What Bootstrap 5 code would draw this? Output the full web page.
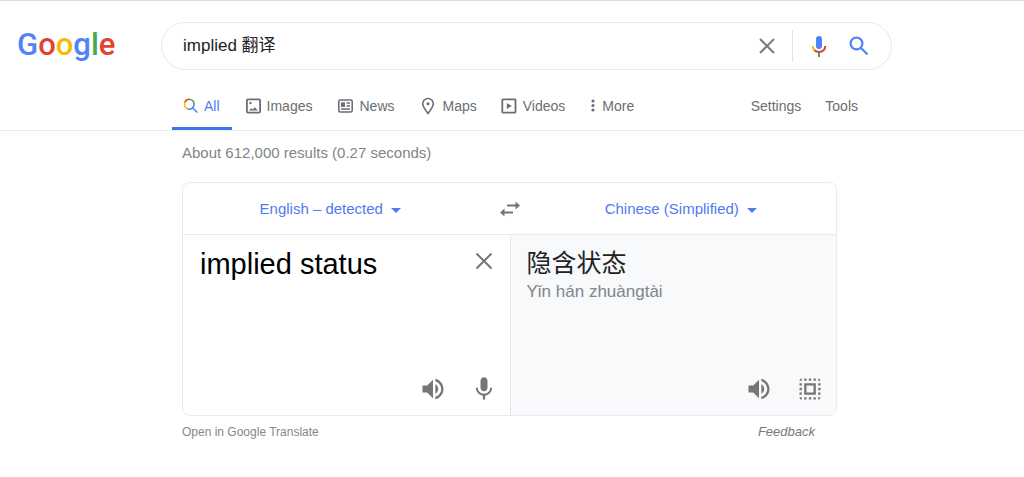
<!DOCTYPE html>
<html lang="en">
<head>
<meta charset="utf-8">
<meta name="viewport" content="width=device-width, initial-scale=1">
<title>implied 翻译 - Google Search</title>
<link href="https://cdn.jsdelivr.net/npm/bootstrap@5.3.0/dist/css/bootstrap.min.css" rel="stylesheet">
<style>
  body { font-family: "Liberation Sans", "Noto Sans CJK SC", sans-serif; font-size: 14px; color: #222; }
  a { text-decoration: none; color: inherit; }
  svg { display: block; flex: none; }
  button { line-height: 20px; }
  .page-top { border-top: 1px solid #dadce0; padding-top: 21px; }
  .brand-col { width: 161px; padding-left: 17px; flex: none; }
  .brand { font: 500 31px/46px Roboto, sans-serif; }
  .g-blue { color: #4f83f7; } .g-red { color: #e0432f; } .g-yellow { color: #f5bb06; } .g-green { color: #4aa752; }
  .search-box { max-width: 731px; height: 48px; border: 1px solid #e8e9eb; border-radius: 24px; padding: 0 19px 0 21px; }
  .search-box input { font-size: 17px; color: #222; outline: 0; }
  .search-divider { width: 1px; height: 32px; background: #e2e4e7; margin: 0 14px 0 13px; }
  .tabs { padding: 12px 0 0 172px; border-bottom: 1px solid #ebebeb; color: #6a6e73; }
  .tabs-inner { max-width: 686px; }
  .tab-link { height: 48px; gap: 6px; padding-top: 3px; border-bottom: 3px solid transparent; }
  .tab-link.current { color: #4f7df3; border-color: #3b76ec; padding-left: 11px; padding-right: 12px; }
  .tab-images { margin-left: 14px; }
  .main-col { margin-left: 182px; max-width: 655px; }
  .stats { font-size: 15px; line-height: 20px; color: #808589; margin: 12px 0 19px; }
  .translator { border: 1px solid #e8eaed; border-radius: 8px; overflow: hidden; }
  .lang-bar { height: 52px; border-bottom: 1px solid #e8eaed; }
  .lang-from { padding-right: 20px; }
  .lang-to { padding-left: 12px; padding-right: 8px; }
  .lang-btn { font-size: 15px; color: #4f7bf0; gap: 8px; }
  .lang-btn svg { margin-top: 3px; }
  .pane { height: 180px; padding: 12px 12px 12px 17px; }
  .pane-out { background: #f8f9fb; border-left: 1px solid #e4e6e9; padding-left: 16px; }
  .source-text { font-size: 29px; line-height: 34px; color: #000; resize: none; outline: 0; }
  .result-text { font-size: 25px; line-height: 32px; color: #222; }
  .pinyin { font-size: 17px; line-height: 26px; color: #80868b; }
  .tool { color: #757575; }
  .pane .tool { width: 28px; }
  .tool-row { gap: 23px; }
  .foot { font-size: 12px; line-height: 16px; color: #85888b; padding: 8px 22px 0 0; }
  .feedback { font-size: 13px; color: #77797c; }
</style>
</head>
<body>
<header class="page-top">
  <div class="d-flex">
    <div class="brand-col"><a href="#" class="brand" aria-label="Google"><span class="g-blue">G</span><span class="g-red">o</span><span class="g-yellow">o</span><span class="g-blue">g</span><span class="g-green">l</span><span class="g-red">e</span></a></div>
    <form class="search-box d-flex align-items-center flex-grow-1">
      <input class="border-0 bg-transparent p-0 flex-grow-1" type="text" aria-label="Search" value="implied 翻译">
      <button type="button" class="border-0 bg-transparent p-0" aria-label="Clear"><svg width="24" height="24" viewBox="0 0 24 24" stroke="#787c80" stroke-width="2" fill="none"><path d="M5 5l14 14M19 5L5 19"/></svg></button>
      <span class="search-divider"></span>
      <button type="button" class="border-0 bg-transparent p-0" aria-label="Search by voice"><svg width="24" height="24" viewBox="0 0 24 24" fill="none"><rect x="9" y="2" width="6" height="13" rx="3" fill="#4f83f7"/><path d="M12 18v5" stroke="#4aa752" stroke-width="2"/><path d="M5.700 12c0 2 .8 3.600 2 4.600" stroke="#f5bb06" stroke-width="2"/><path d="M7.400 16.200c2.300 2.300 6.900 2.300 9.200 0 1.100-1.100 1.700-2.500 1.700-4.200" stroke="#e0432f" stroke-width="2"/></svg></button>
      <button type="submit" class="border-0 bg-transparent p-0 ms-3" aria-label="Google Search"><svg width="25" height="24" viewBox="0 0 25 24" fill="none" stroke="#4f83f7" stroke-width="2.200"><circle cx="9.500" cy="9.500" r="5.900"/><path d="M13.800 13.800l6.700 6.700"/></svg></button>
    </form>
  </div>
  <nav class="tabs">
    <div class="tabs-inner d-flex justify-content-between">
      <div class="d-flex">
        <a href="#" class="tab-link current d-flex align-items-center" aria-current="page"><svg width="15" height="16" viewBox="0 0 15 16" fill="none" stroke-width="1.600"><path d="M1.700 4.600A5 5 0 0 1 6.200 1.200" stroke="#e0432f"/><path d="M6 1.200a5 5 0 0 1 5.100 5" stroke="#4aa752"/><path d="M1.900 4.200a5 5 0 0 0 3.200 6.900" stroke="#f5bb06"/><path d="M11.100 6.100a5 5 0 0 1-6.300 4.900M9.600 9.700l4.800 4.800" stroke="#4f83f7"/></svg>All</a>
        <a href="#" class="tab-link tab-images d-flex align-items-center"><svg width="15" height="16" viewBox="0 0 15 16" fill="none" stroke="currentColor" stroke-width="1.800"><rect x=".9" y="1.400" width="13.200" height="13.200" rx="1"/><path d="M3 12.500l2-2.200 1.500 1.200 2.300-2.200 3 3.200z" fill="currentColor" stroke="none"/><circle cx="4.500" cy="5" r="1.200" fill="currentColor" stroke="none"/></svg>Images</a>
        <a href="#" class="tab-link d-flex align-items-center ms-4"><svg width="17" height="16" viewBox="-1 0 17 16" fill="none" stroke="currentColor" stroke-width="1.600"><rect x="1.800" y="2" width="13.400" height="12" rx="1.500"/><path d="M4 8h4M9.500 5h3.500M9.500 8h3.500M4 11h9"/><path d="M4 4.300h4v4.200H4z" fill="currentColor" stroke="none"/></svg>News</a>
        <a href="#" class="tab-link d-flex align-items-center ms-4"><svg width="18" height="18" viewBox="0 0 18 18" fill="none" stroke="currentColor" stroke-width="1.600"><path d="M9 16.500C6 12.500 3.700 9.500 3.700 6.800a5.300 5.300 0 0 1 10.600 0c0 2.700-2.300 5.700-5.300 9.700z"/><circle cx="9" cy="6.800" r="1.500" fill="currentColor" stroke="none"/></svg>Maps</a>
        <a href="#" class="tab-link d-flex align-items-center ms-4"><svg width="16" height="16" viewBox="0 0 16 16" fill="none" stroke="currentColor" stroke-width="1.800"><rect x="1.300" y="1.400" width="13.200" height="13.200" rx=".5"/><path d="M5.800 5l5 3-5 3z" fill="currentColor" stroke="none"/></svg>Videos</a>
        <a href="#" class="tab-link d-flex align-items-center ms-4"><svg width="7" height="16" viewBox="0 0 7 16" fill="currentColor"><circle cx="4" cy="3" r="1.600"/><circle cx="4" cy="7.500" r="1.600"/><circle cx="4" cy="12" r="1.600"/></svg>More</a>
      </div>
      <div class="d-flex">
        <a href="#" class="tab-link d-flex align-items-center">Settings</a>
        <a href="#" class="tab-link d-flex align-items-center ms-4">Tools</a>
      </div>
    </div>
  </nav>
</header>
<main class="main-col">
  <p class="stats">About 612,000 results (0.27 seconds)</p>
  <section class="translator">
    <div class="lang-bar d-flex align-items-center">
      <div class="col lang-from d-flex justify-content-center"><button type="button" class="lang-btn border-0 bg-transparent p-0 d-flex align-items-center">English – detected<svg width="10" height="5" viewBox="0 0 10 5" fill="currentColor"><path d="M0 0h10L5 5z"/></svg></button></div>
      <button type="button" class="tool border-0 bg-transparent p-0" aria-label="Swap languages"><svg width="24" height="24" viewBox="0 0 24 24" fill="none" stroke="currentColor" stroke-width="2"><path d="M9 8.500h9M15 15.500H6"/><path d="M17.500 4.500v8l4.500-4zM6.500 11.500v8L2 15.500z" fill="currentColor" stroke="none"/></svg></button>
      <div class="col lang-to d-flex justify-content-center"><button type="button" class="lang-btn border-0 bg-transparent p-0 d-flex align-items-center">Chinese (Simplified)<svg width="10" height="5" viewBox="0 0 10 5" fill="currentColor"><path d="M0 0h10L5 5z"/></svg></button></div>
    </div>
    <div class="row g-0">
      <div class="col-6 pane d-flex flex-column justify-content-between">
        <div class="d-flex align-items-start flex-grow-1">
          <textarea class="source-text border-0 bg-transparent p-0 flex-grow-1" rows="2" aria-label="Source text">implied status</textarea>
          <button type="button" class="tool border-0 bg-transparent p-0" aria-label="Clear text"><svg width="28" height="28" viewBox="0 0 28 28" stroke="currentColor" stroke-width="2"><path d="M6.500 6.500l15 15M21.500 6.500l-15 15"/></svg></button>
        </div>
        <div class="tool-row d-flex justify-content-end">
          <button type="button" class="tool border-0 bg-transparent p-0" aria-label="Listen"><svg width="28" height="28" viewBox="0 0 24 24" fill="currentColor"><path d="M3 9v6h4l5 5V4L7 9H3zm13.500 3A4.500 4.500 0 0 0 14 7.970v8.050c1.480-.73 2.500-2.250 2.500-4.020zM14 3.230v2.060c2.890.86 5 3.540 5 6.710s-2.110 5.850-5 6.710v2.060c4.010-.91 7-4.490 7-8.770s-2.990-7.860-7-8.770z"/></svg></button>
          <button type="button" class="tool border-0 bg-transparent p-0" aria-label="Speak"><svg width="28" height="28" viewBox="0 0 24 24" fill="currentColor"><path d="M12 14c1.660 0 3-1.340 3-3V5c0-1.660-1.340-3-3-3S9 3.340 9 5v6c0 1.660 1.340 3 3 3zm5.300-3c0 3-2.540 5.100-5.300 5.100S6.700 14 6.700 11H5c0 3.410 2.720 6.230 6 6.720V21h2v-3.280c3.280-.48 6-3.300 6-6.720h-1.700z"/></svg></button>
        </div>
      </div>
      <div class="col-6 pane pane-out d-flex flex-column justify-content-between" lang="zh-CN">
        <div>
          <div class="result-text">隐含状态</div>
          <div class="pinyin">Yǐn hán zhuàngtài</div>
        </div>
        <div class="tool-row d-flex justify-content-end">
          <button type="button" class="tool border-0 bg-transparent p-0" aria-label="Listen to translation"><svg width="28" height="28" viewBox="0 0 24 24" fill="currentColor"><path d="M3 9v6h4l5 5V4L7 9H3zm13.500 3A4.500 4.500 0 0 0 14 7.970v8.050c1.480-.73 2.500-2.250 2.500-4.020zM14 3.230v2.060c2.890.86 5 3.540 5 6.710s-2.110 5.850-5 6.710v2.060c4.010-.91 7-4.490 7-8.770s-2.990-7.860-7-8.770z"/></svg></button>
          <button type="button" class="tool border-0 bg-transparent p-0" aria-label="Select all"><svg width="28" height="28" viewBox="0 0 24 24" fill="currentColor"><path d="M3 5h2V3c-1.100 0-2 .9-2 2zm0 8h2v-2H3v2zm4 8h2v-2H7v2zM3 9h2V7H3v2zm10-6h-2v2h2V3zm6 0v2h2c0-1.100-.9-2-2-2zM5 21v-2H3c0 1.100.9 2 2 2zm-2-4h2v-2H3v2zM9 3H7v2h2V3zm2 18h2v-2h-2v2zm8-8h2v-2h-2v2zm0 8c1.100 0 2-.9 2-2h-2v2zm0-12h2V7h-2v2zm0 8h2v-2h-2v2zm-4 4h2v-2h-2v2zm0-16h2V3h-2v2zM7 17h10V7H7v10zm2-8h6v6H9V9z"/></svg></button>
        </div>
      </div>
    </div>
  </section>
  <div class="foot d-flex justify-content-between"><a href="#">Open in Google Translate</a><a href="#" class="feedback fst-italic">Feedback</a></div>
</main>
<script src="https://cdn.jsdelivr.net/npm/bootstrap@5.3.0/dist/js/bootstrap.bundle.min.js"></script>
</body>
</html>
